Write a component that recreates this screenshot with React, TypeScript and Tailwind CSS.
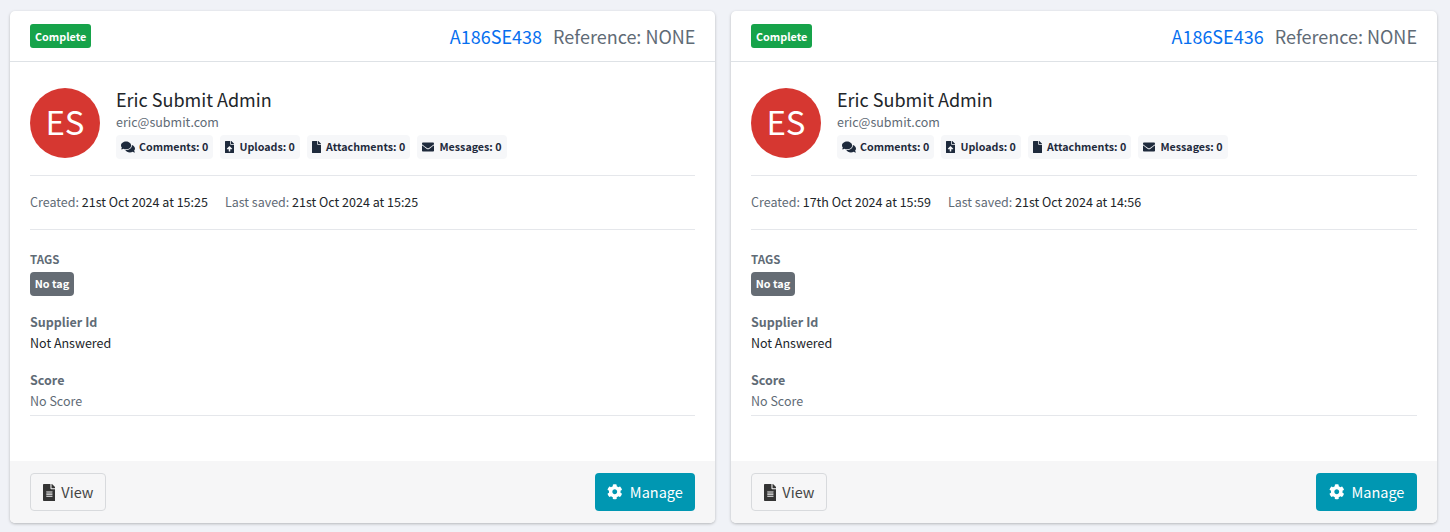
import { clsx } from "clsx";
import { FaCog, FaComments, FaEnvelope, FaFile, FaFileAlt, FaFileUpload } from "react-icons/fa";

const font = "font-['Noto_Sans_CJK_SC','Noto_Sans',sans-serif]";

const Stat = ({ icon, label }: { icon: React.ReactNode; label: string }) => (
  <span className="flex h-[24px] items-center gap-[5px] rounded-[4px] bg-[#f6f7f9] px-[5px] text-[10.7px] font-bold text-[#1e2a3c]">
    {icon}
    {label}
  </span>
);

const Submission = ({ id, created, saved, className }: { id: string; created: string; saved: string; className: string }) => (
  <div className={clsx("flex h-[512px] flex-col overflow-hidden rounded-[5px] bg-white shadow-[0_1px_3px_rgba(0,0,0,0.25)]", className)}>
    <div className="flex h-[51px] items-center justify-between border-b border-[#dee2e6] px-[20px]">
      <span className="flex h-[24px] items-center rounded-[3px] bg-[#16a34a] px-[5px] text-[10.8px] font-bold text-white">
        Complete
      </span>
      <div className="flex items-center gap-[11px] text-[18px] leading-[24px]">
        <span className="text-[#066fef]">{id}</span>
        <span className="text-[#5f6b76]">Reference: NONE</span>
      </div>
    </div>

    <div className="flex-1 px-[20px]">
      <div className="flex h-[114px] gap-[16px] border-b border-[#e5e7eb] pt-[26px]">
        <div className="flex h-[70px] w-[70px] items-center justify-center rounded-full bg-[#d63731] pb-[2px] text-[33px] text-white">
          ES
        </div>
        <div>
          <div className="-mt-[1px] text-[18px] leading-[24px] text-[#212529]">Eric Submit Admin</div>
          <div className="mt-[2px] text-[12.5px] leading-[18px] text-[#5f6b76]">eric@submit.com</div>
          <div className="mt-[4px] flex gap-[7.2px]">
            <Stat icon={<FaComments className="-mr-[1px] h-[14px] w-[14px]" />} label="Comments: 0" />
            <Stat icon={<FaFileUpload className="h-[12px] w-[9px]" />} label="Uploads: 0" />
            <Stat icon={<FaFile className="h-[12px] w-[9px]" />} label="Attachments: 0" />
            <Stat icon={<FaEnvelope className="h-[12px] w-[12px]" />} label="Messages: 0" />
          </div>
        </div>
      </div>

      <div className="flex h-[54px] items-center gap-[17px] border-b border-[#e5e7eb] pb-[1px] text-[12.5px] text-[#5f6b76]">
        <span>
          Created: <span className="text-[#212529]">{created}</span>
        </span>
        <span>
          Last saved: <span className="text-[#212529]">{saved}</span>
        </span>
      </div>

      <div className="mt-[20px] text-[11.5px] font-bold leading-[18px] text-[#5f6b76]">TAGS</div>
      <span className="mt-[4px] flex h-[24px] w-[44px] items-center justify-center rounded-[4px] bg-[#656c74] pb-[1px] text-[10.8px] font-bold text-white">
        No tag
      </span>

      <div className="mt-[17px] text-[12.5px] font-bold leading-[18px] text-[#5f6b76]">Supplier Id</div>
      <div className="mt-[3px] text-[12.5px] leading-[18px] text-[#212529]">Not Answered</div>

      <div className="mt-[19px] text-[12.5px] font-bold leading-[18px] text-[#5f6b76]">Score</div>
      <div className="mt-[3px] border-b border-[#e5e7eb] pb-[5px] text-[12.5px] leading-[18px] text-[#5f6b76]">
        No Score
      </div>
    </div>

    <div className="flex h-[62px] items-center justify-between bg-[#f6f6f7] px-[20px]">
      <button className="flex h-[38px] w-[76px] items-center justify-center gap-[6px] rounded-[4px] border border-[#d8dadd] text-[14.5px] text-[#444]">
        <FaFileAlt className="h-[17px] w-[12.75px] text-[#343434]" />
        View
      </button>
      <button className="flex h-[38px] w-[100.6px] items-center justify-center gap-[7px] rounded-[4px] bg-[#0097b2] text-[14.5px] text-white">
        <FaCog className="h-[15.5px] w-[15.5px]" />
        Manage
      </button>
    </div>
  </div>
);

export default function App() {
  return (
    <div className={`h-[532px] overflow-hidden bg-[#f0f2f7] pl-[10px] pt-[11px] ${font}`}>
      <div className="flex gap-[15.6px]">
        <Submission className="w-[705.4px]" id="A186SE438" created="21st Oct 2024 at 15:25" saved="21st Oct 2024 at 15:25" />
        <Submission className="w-[706px]" id="A186SE436" created="17th Oct 2024 at 15:59" saved="21st Oct 2024 at 14:56" />
      </div>
    </div>
  );
}
